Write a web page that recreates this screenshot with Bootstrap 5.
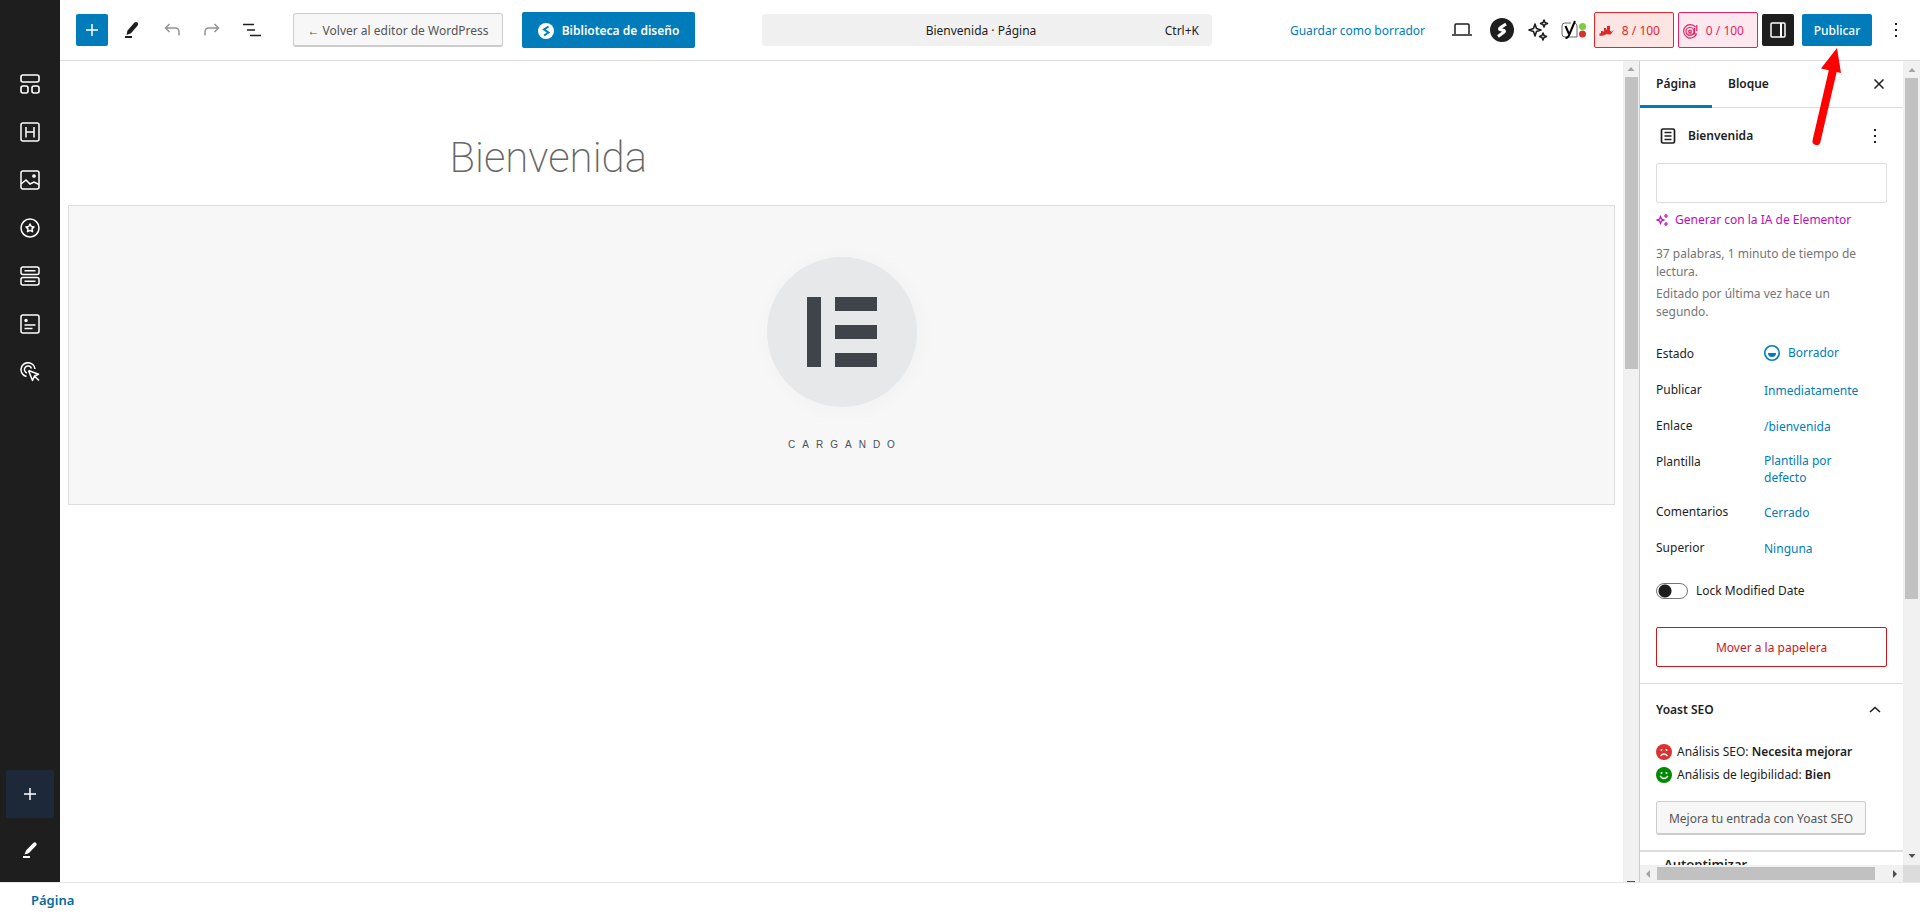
<!DOCTYPE html>
<html lang="es">
<head>
<meta charset="utf-8">
<meta name="viewport" content="width=device-width, initial-scale=1">
<title>Bienvenida · Página</title>
<link href="https://cdn.jsdelivr.net/npm/bootstrap@5.3.0/dist/css/bootstrap.min.css" rel="stylesheet">
<style>
  :root { --wp-blue: #007cba; --ink: #1e1e1e; --line: #dddddd; }
  html, body { height: 100%; }
  body { font-family: "Noto Sans", "Open Sans", sans-serif; font-size: 12px; line-height: 18px; color: var(--ink); overflow: hidden; }
  svg { display: block; flex: none; }
  a { color: var(--wp-blue); text-decoration: none; }
  .btn { --bs-btn-font-size: 12px; --bs-btn-line-height: 18px; --bs-btn-border-radius: 2px; --bs-btn-padding-x: 0; --bs-btn-padding-y: 0; color: var(--ink); display: inline-flex; align-items: center; justify-content: center; white-space: nowrap; }
  .icon-btn { width: 32px; height: 32px; flex: none; }
  .btn.solid { background: var(--wp-blue); color: #fff; }
  .btn.dark { background: var(--ink); color: #fff; }
  .btn.grey { background: #f7f7f7; border: 1px solid #cccccc; border-bottom-width: 2px; border-radius: 3px; color: #555555; height: 34px; padding-top: 2px; }
  .btn.label { padding-top: 2px; }
  .rail { width: 60px; background: var(--ink); color: #fff; padding-top: 60px; flex: none; }
  .rail .btn { width: 48px; height: 48px; color: #fff; }
  .rail .adder { background: #1d2939; }
  .topbar { display: grid; grid-template-columns: 1fr 450px 1fr; height: 61px; border-bottom: 1px solid var(--line); padding: 0 8px 0 2px; align-items: center; flex: none; }
  .finder { background: #f0f0f0; height: 32px; border-radius: 4px; display: grid; grid-template-columns: 1fr auto 1fr; padding: 2px 12px 0 0; color: var(--ink); }
  .score { width: 80px; height: 36px; border: 1px solid; border-radius: 2px; padding: 2px 13px 0 4px; justify-content: space-between; }
  .btn.score.red { background: #fde5e3; color: #e02828; border-color: #e02828; }
  .btn.score.pink { background: #fde8f0; color: #e61e62; border-color: #e61e62; }
  .page-title { max-width: 784px; font: 200 42px/52px Roboto, "Liberation Sans", sans-serif; color: #666666; margin: 71px auto 21px; }
  .loading { height: 300px; background: #f7f7f7; border: 1px solid var(--line); margin: 0 8px; padding-top: 51px; }
  .disc { width: 150px; height: 150px; border-radius: 50%; background: #e6e8ea; box-shadow: 2px 2px 20px 4px rgba(0,0,0,.02); }
  .loading-text { font: 10px/14px "Liberation Sans", sans-serif; letter-spacing: 7px; padding-left: 7px; margin-top: 31px; color: #495157; }
  .vbar { background: #f1f1f1; width: 16px; flex: none; display: flex; flex-direction: column; align-items: center; }
  .vbar .thumb { background: #c1c1c1; width: 13px; }
  .hbar { background: #f1f1f1; height: 17px; flex: none; display: flex; align-items: center; }
  .hbar .thumb { background: #c1c1c1; height: 13px; width: 218px; }
  .corner { background: #dcdcdc; width: 17px; height: 17px; }
  .panel { width: 281px; border-left: 1px solid #cccccc; flex: none; }
  .tabs { height: 47px; border-bottom: 1px solid var(--line); flex: none; }
  .tabs .btn { padding: 0 16px; border-radius: 0; height: 47px; font-weight: 600; border: 0; }
  .tabs .btn.active { border-bottom: 3px solid var(--wp-blue); padding-top: 3px; color: var(--ink); }
  .tabs .btn.closer { padding: 0; width: 32px; margin-right: 8px; }
  .card-line { height: 55px; padding: 0 8px 0 20px; flex: none; }
  .picture { height: 40px; border: 1px solid var(--line); border-radius: 2px; padding: 0; }
  .muted-text { color: #757575; padding-right: 16px; }
  .fact { min-height: 36px; display: grid; grid-template-columns: 108px 1fr; }
  .fact dt { font-weight: 400; padding-top: 1px; }
  .fact dd { margin: 0; padding-top: 2px; }
  .fact.tall { min-height: 50px; }
  .fact.tall dd { line-height: 17px; padding-top: 0; }
  .form-switch.lock { padding: 0; min-height: 0; display: flex; align-items: center; gap: 8px; margin: 0; }
  .form-switch.lock input { margin: 0; float: none; width: 32px; height: 16px; border: 1px solid #757575; background-image: radial-gradient(circle at 8px 7px, #1e1e1e 6px, transparent 7px); background-size: 100% 100%; background-position: 0 0; }
  .trash { height: 40px; }
  .btn.trash { border: 1px solid #cc1818; color: #cc1818; padding-top: 2px; }
  .section-line { border-top: 1px solid var(--line); }
  .footer-bar { height: 35px; border-top: 1px solid #e6e6e6; padding-left: 31px; flex: none; }
  .footer-bar a { font-weight: 600; color: #006ba1; line-height: 34px; font-size: 13px; }
  .pointer { position: absolute; top: 48px; right: 79px; pointer-events: none; }
  .cut { padding: 3px 24px 0; border-top: 2px solid var(--line); overflow: hidden; min-height: 0; font-size: 13px; font-weight: 600; }
</style>
</head>
<body class="d-flex flex-column bg-white">
<div class="d-flex flex-grow-1" style="min-height:0">
  <nav class="rail d-flex flex-column align-items-center" aria-label="Bloques">
    <button class="btn" aria-label="Diseño"><svg width="20" height="20" fill="none" stroke="currentColor" stroke-width="1.6"><rect x="1" y="1" width="18" height="7" rx="2"/><rect x="1" y="12" width="7" height="7" rx="2"/><rect x="12" y="12" width="7" height="7" rx="2"/></svg></button>
    <button class="btn" aria-label="Encabezado"><svg width="20" height="20" fill="none" stroke="currentColor" stroke-width="1.5"><rect x="1" y="1" width="18" height="18" rx="2"/><path d="M6 5v10.500M14 5v10.500M6 10h8"/></svg></button>
    <button class="btn" aria-label="Imagen"><svg width="20" height="20" fill="none" stroke="currentColor" stroke-width="1.500"><rect x="1" y="1" width="18" height="18" rx="2"/><path d="M1 14l5-4 4 4 4-2 5 2.500"/><circle cx="14" cy="6" r="1.100" fill="currentColor"/></svg></button>
    <button class="btn" aria-label="Icono"><svg width="20" height="20" fill="none" stroke="currentColor" stroke-width="1.500" stroke-linejoin="round"><circle cx="10" cy="10" r="9"/><path d="M10 6l1.300 2.500 2.700.4-2 2 .5 2.800-2.500-1.300-2.500 1.300.5-2.800-2-2 2.700-.4z"/></svg></button>
    <button class="btn" aria-label="Botones"><svg width="20" height="20" fill="none" stroke="currentColor" stroke-width="1.500"><rect x="1" y="1" width="18" height="7.500" rx="2"/><rect x="1" y="11.500" width="18" height="7.500" rx="2"/><path d="M4.500 4.750h11M4.500 15.250h11"/></svg></button>
    <button class="btn" aria-label="Formulario"><svg width="20" height="20" fill="none" stroke="currentColor" stroke-width="1.500"><rect x="1" y="1" width="18" height="18" rx="2"/><path d="M4.500 11h11M4.500 14.500h8"/><circle cx="6" cy="6.500" r="1" fill="currentColor"/></svg></button>
    <button class="btn" aria-label="Acción"><svg width="20" height="20" fill="none" stroke="currentColor" stroke-width="1.500" stroke-linejoin="round"><path d="M6.500 14.500A7 7 0 1 1 15 7M7 11a3.600 3.600 0 1 1 4.500-4.500"/><path d="M8.500 8.500l10 3.700-4 1.800 4.500 4.500M14.500 14l-2 4.500-4-10"/></svg></button>
    <button class="btn adder mt-auto" aria-label="Añadir"><svg width="12" height="12" stroke="currentColor" stroke-width="1.500"><path d="M6 0v12M0 6h12"/></svg></button>
    <button class="btn my-2" aria-label="Editar"><svg width="16" height="18" viewBox="0 0 16 18"><path d="M4 9.500l7.500-7.700q1.600-1 2.700.2 1 1.200 0 2.600L6.700 12.300 2.500 13.500zM1 15h7v2H1z" fill="currentColor"/></svg></button>
  </nav>

  <div class="d-flex flex-column flex-grow-1" style="min-width:0">
    <header class="topbar">
      <div class="d-flex align-items-center" style="padding-left:14px">
        <button class="btn icon-btn solid" aria-label="Añadir bloque"><svg width="14" height="14" stroke="currentColor" stroke-width="1.500"><path d="M7 1v12M1 7h12"/></svg></button>
        <div class="d-flex gap-2 ms-2">
          <button class="btn icon-btn" aria-label="Herramientas"><svg width="16" height="18" viewBox="0 0 16 18"><path d="M3.500 9.500L10.500 1.600q1.600-1.200 3 0 1.200 1.200.2 2.800L7 12.300 2.500 14zM1 15h7v2H1z" fill="currentColor"/></svg></button>
          <button class="btn icon-btn" aria-label="Deshacer"><svg width="16" height="14" fill="none" stroke="#949494" stroke-width="1.500"><path d="M5.500 1L1.500 5l4 4M1.500 5H11q4 0 4 4v3.500"/></svg></button>
          <button class="btn icon-btn" aria-label="Rehacer"><svg width="16" height="14" fill="none" stroke="#949494" stroke-width="1.500"><path d="M10.500 1l4 4-4 4M14.500 5H5Q1 5 1 9v3.500"/></svg></button>
          <button class="btn icon-btn" aria-label="Vista de lista"><svg width="18" height="14" stroke="currentColor" stroke-width="1.600"><path d="M0 1.500h11M4 7h8M7 12.500h11"/></svg></button>
        </div>
        <button class="btn grey" style="width:210px;margin-left:25px">← Volver al editor de WordPress</button>
        <button class="btn solid label fw-semibold" style="width:173px;height:36px;margin-left:19px;gap:8px"><svg width="16" height="16"><circle cx="8" cy="8" r="8" fill="#fff"/><path d="M10.500 3.500L6 6.500l4.500 3L6 12.500" fill="none" stroke="#007cba" stroke-width="2"/></svg>Biblioteca de diseño</button>
      </div>
      <button class="btn finder"><span></span><span>Bienvenida · Página</span><span class="text-end">Ctrl+K</span></button>
      <div class="d-flex align-items-center justify-content-end">
        <a href="#" class="btn label text-nowrap me-3" style="color:#007cba">Guardar como borrador</a>
        <button class="btn icon-btn me-1" style="margin-left:4px" aria-label="Vista"><svg width="20" height="14" fill="none" stroke="currentColor" stroke-width="1.500"><path d="M3 11V2q0-1 1-1h12q1 0 1 1v9M0 12h20"/></svg></button>
        <button class="btn icon-btn me-1" style="margin-left:4px" aria-label="Spectra"><svg width="24" height="24"><circle cx="12" cy="12" r="12" fill="#1e1e1e"/><path d="M16 6l-6 4q-1 1 0 1.500l4 1q1 .7 0 1.500l-6 4.500" fill="none" stroke="#fff" stroke-width="3"/></svg></button>
        <button class="btn icon-btn" aria-label="IA"><svg width="22" height="22" fill="none" stroke="currentColor" stroke-width="1.600" stroke-linejoin="round"><path d="M8 5l1.500 4.500L14 11l-4.500 1.500L8 17l-1.500-4.500L2 11l4.500-1.500zM17 1l1 2.500L20.500 4.500 18 5.500 17 8l-1-2.500-2.500-1 2.500-1zM16 14l1 2.500 2.500 1L17 18.500 16 21l-1-2.500-2.500-1 2.500-1z"/></svg></button>
        <button class="btn icon-btn me-1" style="margin-left:4px" aria-label="Yoast SEO"><svg width="26" height="20" viewBox="0 0 26 20"><path d="M10 3H4Q1 3 1 6v8q0 3 3 3h12V6q0-2-2-3" fill="#fff" stroke="#666" stroke-width="1"/><path d="M4.500 6l3.500 8M14 1L8.500 14q-1.200 4-4 4" fill="none" stroke="#000" stroke-width="2"/><circle cx="21.500" cy="6.500" r="3.500" fill="#7ad03a"/><circle cx="21.500" cy="14" r="3.500" fill="#dc3232"/></svg></button>
        <button class="btn score red me-1"><svg width="15" height="11" viewBox="0 0 15 11" fill="currentColor"><path d="M0 8l2-1V5h2v1l1-1V2h2v2l1-1V0h3v5h1v1l3-2-3 4q-2 1-4 0-4 2-8 2l1-1z"/></svg>8 / 100</button>
        <button class="btn score pink me-1"><svg width="15" height="15" fill="none" stroke="currentColor" stroke-width="1.200"><path d="M12.500 3a6.700 6.700 0 1 0 1 7H5"/><circle cx="7" cy="7.500" r="4"/><circle cx="7" cy="7.500" r="1.300"/><path d="M11.500 4v6M13.800 1v6"/></svg>0 / 100</button>
        <button class="btn icon-btn dark me-2" aria-label="Ajustes"><svg width="16" height="16"><rect x="1" y="1" width="14" height="14" rx="1" fill="none" stroke="#fff" stroke-width="1.500"/><path d="M11 1v14" stroke="#fff" stroke-width="2"/></svg></button>
        <button class="btn solid label fw-medium me-2" style="width:70px;height:32px">Publicar</button>
        <button class="btn icon-btn" aria-label="Opciones"><svg width="2" height="14" fill="currentColor"><path d="M0 0h2v2H0zM0 6h2v2H0zM0 12h2v2H0z"/></svg></button>
      </div>
    </header>

    <div class="d-flex flex-grow-1" style="min-height:0">
      <main class="flex-grow-1" style="min-width:0">
        <h1 class="page-title">Bienvenida</h1>
        <section class="loading d-flex flex-column align-items-center">
          <div class="disc d-flex align-items-center justify-content-center"><svg width="70" height="70" fill="#3f444b"><path d="M0 0h14v70H0zM28 0h42v14H28zM28 28h42v14H28zM28 56h42v14H28z"/></svg></div>
          <div class="loading-text">CARGANDO</div>
        </section>
      </main>
      <div class="vbar" aria-hidden="true">
        <svg width="16" height="16"><path d="M4.500 10L8 6l3.500 4z" fill="#a3a3a3"/></svg>
        <div class="thumb" style="height:292px"></div>
        <svg class="mt-auto" width="8" height="2"><path d="M0 1h8v1H0z" fill="#505050"/></svg>
      </div>
      <aside class="panel d-flex flex-column">
        <div class="d-flex flex-grow-1" style="min-height:0">
          <div class="d-flex flex-column flex-grow-1" style="min-width:0">
            <div class="tabs d-flex align-items-center">
              <button class="btn active">Página</button>
              <button class="btn">Bloque</button>
              <button class="btn closer ms-auto" aria-label="Cerrar"><svg width="10" height="10" stroke="currentColor" stroke-width="1.500"><path d="M.5.5l9 9M9.500.5l-9 9"/></svg></button>
            </div>
            <div class="card-line d-flex align-items-center">
              <svg width="16" height="16" fill="none" stroke="currentColor" stroke-width="1.700"><rect x="1.500" y="1" width="13" height="14" rx="1.500"/><path d="M4.500 4.500h7M4.500 8h7M4.500 11.500h7"/></svg>
              <span class="fw-semibold" style="margin-left:12px">Bienvenida</span>
              <button class="btn icon-btn ms-auto" style="width:40px" aria-label="Acciones"><svg width="2" height="14" fill="currentColor"><path d="M0 0h2v2H0zM0 6h2v2H0zM0 12h2v2H0z"/></svg></button>
            </div>
            <div class="px-3">
              <button class="btn picture w-100" aria-label="Imagen destacada"></button>
              <a href="#" class="d-flex align-items-center" style="color:#c00bb9;margin-top:8px;gap:7px"><svg width="12" height="12" fill="none" stroke="currentColor" stroke-width="1.200"><path d="M4.500 2.500l1 2.500L8 6 5.500 7l-1 2.500-1-2.500L1 6l2.500-1zM10 0v4M8 2h4M10 8v4M8 10h4"/></svg>Generar con la IA de Elementor</a>
              <p class="muted-text mb-1" style="margin-top:16px">37 palabras, 1 minuto de tiempo de lectura.</p>
              <p class="muted-text" style="margin-bottom:23px">Editado por última vez hace un segundo.</p>
              <dl class="mb-0">
                <div class="fact"><dt>Estado</dt><dd class="pt-0"><a href="#" class="d-flex align-items-center gap-2"><svg width="16" height="16"><circle cx="8" cy="8" r="7.200" fill="none" stroke="currentColor" stroke-width="1.600"/><path d="M4 8h8a4 4 0 0 1-8 0z" fill="currentColor"/></svg>Borrador</a></dd></div>
                <div class="fact"><dt>Publicar</dt><dd><a href="#">Inmediatamente</a></dd></div>
                <div class="fact"><dt>Enlace</dt><dd><a href="#">/bienvenida</a></dd></div>
                <div class="fact tall"><dt>Plantilla</dt><dd><a href="#">Plantilla por<br>defecto</a></dd></div>
                <div class="fact"><dt>Comentarios</dt><dd><a href="#">Cerrado</a></dd></div>
                <div class="fact"><dt>Superior</dt><dd><a href="#">Ninguna</a></dd></div>
              </dl>
              <div class="form-check form-switch lock" style="margin:8px 0 27px"><input class="form-check-input" type="checkbox" role="switch" id="lock"><label for="lock">Lock Modified Date</label></div>
              <button class="btn trash w-100">Mover a la papelera</button>
            </div>
            <div class="section-line mt-3 px-3">
              <div class="d-flex align-items-center justify-content-between fw-semibold" style="height:52px;padding-right:6px">Yoast SEO<svg width="12" height="8" fill="none" stroke="currentColor" stroke-width="1.600"><path d="M1 6l5-4.500L11 6"/></svg></div>
              <div class="d-flex align-items-center" style="margin-top:7px;gap:5px"><svg width="16" height="16"><circle cx="8" cy="8" r="8" fill="#dc3232"/><circle cx="5.500" cy="6" r="1" fill="#fff"/><circle cx="10.500" cy="6" r="1" fill="#fff"/><path d="M4.500 12q3.500-4 7 0" fill="none" stroke="#fff" stroke-width="1.300"/></svg><span>Análisis SEO: <span class="fw-semibold">Necesita mejorar</span></span></div>
              <div class="d-flex align-items-center" style="margin-top:5px;gap:5px"><svg width="16" height="16"><circle cx="8" cy="8" r="8" fill="#008a00"/><circle cx="5.500" cy="6" r="1" fill="#fff"/><circle cx="10.500" cy="6" r="1" fill="#fff"/><path d="M4 9q4 5 8 0" fill="none" stroke="#fff" stroke-width="1.300"/></svg><span>Análisis de legibilidad: <span class="fw-semibold">Bien</span></span></div>
              <button class="btn grey" style="width:210px;margin:17px 0 15px">Mejora tu entrada con Yoast SEO</button>
            </div>
            <div class="cut">Autoptimizar</div>
          </div>
          <div class="vbar" style="width:17px" aria-hidden="true">
            <svg width="16" height="17"><path d="M4.500 11L8 7l3.500 4z" fill="#a3a3a3"/></svg>
            <div class="thumb" style="height:521px"></div>
            <svg class="mt-auto" width="16" height="16"><path d="M4.500 5L8 9l3.500-4z" fill="#505050"/></svg>
          </div>
        </div>
        <div class="d-flex" aria-hidden="true">
          <div class="hbar flex-grow-1">
            <svg width="17" height="16"><path d="M10 4L6 8l4 4z" fill="#a3a3a3"/></svg>
            <div class="thumb"></div>
            <svg class="ms-auto" width="16" height="16"><path d="M6 4l4 4-4 4z" fill="#505050"/></svg>
          </div>
          <div class="corner"></div>
        </div>
      </aside>
    </div>
  </div>
</div>
<footer class="footer-bar"><a href="#">Página</a></footer>
<svg class="pointer" width="30" height="100"><path d="M22 22L5.500 93" stroke="#f00" stroke-width="8" stroke-linecap="round"/><path d="M26 0L10 20.500 30 25z" fill="#f00"/></svg>
<script src="https://cdn.jsdelivr.net/npm/bootstrap@5.3.0/dist/js/bootstrap.bundle.min.js"></script>
</body>
</html>
